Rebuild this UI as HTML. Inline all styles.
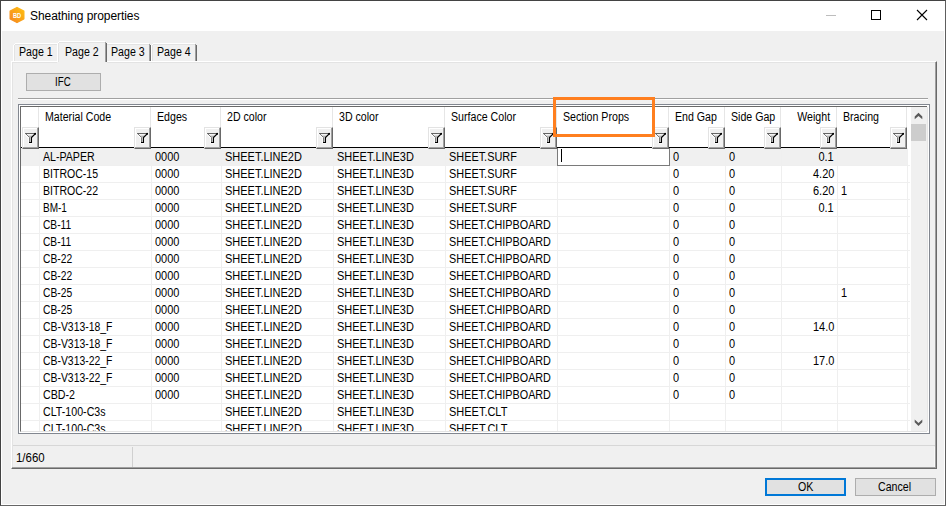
<!DOCTYPE html>
<html><head><meta charset="utf-8"><title>Sheathing properties</title>
<style>
*{box-sizing:border-box;margin:0;padding:0}
html,body{width:946px;height:506px;overflow:hidden;background:#f0f0f0}
body{position:relative;font-family:"Liberation Sans",sans-serif;font-size:12px;color:#000;line-height:14px}
.a{position:absolute}
.t{position:absolute;white-space:nowrap;font-size:12px;line-height:14px;transform:scaleX(0.885);transform-origin:0 0}
.t.r{transform-origin:100% 0}
#ttext{left:30px;top:9px;font-size:12px;line-height:15px;white-space:nowrap;letter-spacing:-0.07px}
.fb{position:absolute;width:17px;height:22px;background:#f0f0f0;border-left:1px solid #e3e3e3;border-top:1px solid #e3e3e3;border-right:1px solid #696969;border-bottom:1px solid #696969;box-shadow:inset -1px -1px 0 #a0a0a0, inset 1px 1px 0 #fff}
.fb svg{position:absolute;left:1px;top:4px}
.vl{position:absolute;width:1px;background:#efefef;top:0;height:325px}
.hl{position:absolute;height:1px;background:#efefef;left:0}
</style></head><body>
<div class="a" style="left:0;top:0;width:946px;height:506px;border:1px solid #434343;border-right-color:#5e5e5e;border-bottom-color:#666"></div>
<div class="a" style="left:1px;top:31px;width:944px;height:474px;border:1px solid #fff;border-top:none"></div>
<div class="a" style="left:1px;top:1px;width:944px;height:30px;background:#fff"></div>
<svg class="a" style="left:8px;top:6px" width="18" height="18" viewBox="0 0 18 18"><defs><linearGradient id="g" x1="0" y1="1" x2="1" y2="0"><stop offset="0" stop-color="#f5851f"/><stop offset="1" stop-color="#ffc010"/></linearGradient></defs><path d="M9 1.5L15.8 5.2V12.8L9 16.5L2.2 12.8V5.2Z" fill="url(#g)" stroke="url(#g)" stroke-width="1.4" stroke-linejoin="round"/><text x="9.1" y="12" font-family="Liberation Sans,sans-serif" font-size="7.4" font-weight="bold" fill="#fff" text-anchor="middle" textLength="8.2" lengthAdjust="spacingAndGlyphs">BD</text></svg>
<div id="ttext" class="a">Sheathing properties</div>
<div class="a" style="left:826px;top:15px;width:10px;height:1px;background:#bdbdbd"></div>
<div class="a" style="left:871px;top:10px;width:10px;height:10px;border:1px solid #000"></div>
<svg class="a" style="left:916px;top:9px" width="12" height="12" viewBox="0 0 12 12"><path d="M1 1L11 11M11 1L1 11" stroke="#000" stroke-width="1.1" fill="none"/></svg>

<div class="a" style="left:11px;top:61px;width:926px;height:408px;background:transparent;border-left:1px solid #fff;border-top:1px solid #fff;border-right:1px solid #696969;border-bottom:1px solid #696969;box-shadow:inset -1px -1px 0 #a0a0a0, inset 1px 1px 0 #e3e3e3"></div>
<div class="a" style="left:13px;top:45px;width:1px;height:16px;background:#fff;"></div>
<div class="a" style="left:14px;top:45px;width:1px;height:16px;background:#e3e3e3;"></div>
<div class="a" style="left:14px;top:44px;width:1px;height:1px;background:#fff;"></div>
<div class="a" style="left:15px;top:43px;width:42px;height:1px;background:#fff;"></div>
<div class="a" style="left:15px;top:44px;width:42px;height:1px;background:#e3e3e3;"></div>
<div class="a" style="left:107px;top:43px;width:42px;height:1px;background:#fff;"></div>
<div class="a" style="left:107px;top:44px;width:42px;height:1px;background:#e3e3e3;"></div>
<div class="a" style="left:150px;top:45px;width:1px;height:16px;background:#696969;"></div>
<div class="a" style="left:149px;top:44px;width:1px;height:17px;background:#a0a0a0;"></div>
<div class="a" style="left:151px;top:45px;width:1px;height:16px;background:#fff;"></div>
<div class="a" style="left:152px;top:45px;width:1px;height:16px;background:#e3e3e3;"></div>
<div class="a" style="left:152px;top:44px;width:1px;height:1px;background:#fff;"></div>
<div class="a" style="left:153px;top:43px;width:42px;height:1px;background:#fff;"></div>
<div class="a" style="left:153px;top:44px;width:42px;height:1px;background:#e3e3e3;"></div>
<div class="a" style="left:196px;top:45px;width:1px;height:16px;background:#696969;"></div>
<div class="a" style="left:195px;top:44px;width:1px;height:17px;background:#a0a0a0;"></div>
<div class="a" style="left:57px;top:41px;width:50px;height:22px;background:#f0f0f0;"></div>
<div class="a" style="left:57px;top:43px;width:1px;height:19px;background:#fff;"></div>
<div class="a" style="left:58px;top:43px;width:1px;height:19px;background:#e3e3e3;"></div>
<div class="a" style="left:58px;top:42px;width:1px;height:1px;background:#fff;"></div>
<div class="a" style="left:59px;top:41px;width:46px;height:1px;background:#fff;"></div>
<div class="a" style="left:59px;top:42px;width:46px;height:1px;background:#e3e3e3;"></div>
<div class="a" style="left:106px;top:43px;width:1px;height:19px;background:#696969;"></div>
<div class="a" style="left:105px;top:42px;width:1px;height:20px;background:#a0a0a0;"></div>
<div class="a" style="left:59px;top:61px;width:46px;height:2px;background:#f0f0f0;"></div>
<div class="t" style="left:19px;top:45px;">Page 1</div>
<div class="t" style="left:65px;top:45px;">Page 2</div>
<div class="t" style="left:111px;top:45px;">Page 3</div>
<div class="t" style="left:157px;top:45px;">Page 4</div>
<div class="a" style="left:26px;top:73px;width:75px;height:18px;background:#e1e1e1;border:1px solid #adadad"></div>
<div class="t" style="left:55.2px;top:75px;transform:scaleX(0.81);">IFC</div>
<div class="a" style="left:18px;top:98px;width:910px;height:1px;background:#a0a0a0;"></div>
<div class="a" style="left:18px;top:99px;width:910px;height:1px;background:#fff;"></div>
<div class="a" style="left:18px;top:104px;width:912px;height:330px;background:#fff;border:1px solid #828790"></div>
<div class="a" style="left:20px;top:106px;width:907px;height:326px;background:#fff;border-left:1px solid #696969;border-top:1px solid #696969;border-bottom:1px solid #e3e3e3"></div>
<div class="a" style="left:21px;top:107px;width:907px;height:324px;overflow:hidden">
<div class="a" style="left:0px;top:41px;width:887px;height:18px;background:#f0f0f0;"></div>
<div class="vl" style="left:18px;top:41px"></div>
<div class="vl" style="left:17px;height:40px;background:#e6e6e6"></div>
<div class="vl" style="left:130px;top:41px"></div>
<div class="vl" style="left:129px;height:40px;background:#e6e6e6"></div>
<div class="vl" style="left:200px;top:41px"></div>
<div class="vl" style="left:199px;height:40px;background:#e6e6e6"></div>
<div class="vl" style="left:312px;top:41px"></div>
<div class="vl" style="left:311px;height:40px;background:#e6e6e6"></div>
<div class="vl" style="left:424px;top:41px"></div>
<div class="vl" style="left:423px;height:40px;background:#e6e6e6"></div>
<div class="vl" style="left:536px;top:41px"></div>
<div class="vl" style="left:535px;height:40px;background:#e6e6e6"></div>
<div class="vl" style="left:648px;top:41px"></div>
<div class="vl" style="left:647px;height:40px;background:#e6e6e6"></div>
<div class="vl" style="left:704px;top:41px"></div>
<div class="vl" style="left:703px;height:40px;background:#e6e6e6"></div>
<div class="vl" style="left:760px;top:41px"></div>
<div class="vl" style="left:759px;height:40px;background:#e6e6e6"></div>
<div class="vl" style="left:816px;top:41px"></div>
<div class="vl" style="left:815px;height:40px;background:#e6e6e6"></div>
<div class="vl" style="left:886px;top:41px"></div>
<div class="vl" style="left:885px;height:40px;background:#e6e6e6"></div>
<div class="hl" style="top:58px;width:889px"></div>
<div class="hl" style="top:75px;width:889px"></div>
<div class="hl" style="top:92px;width:889px"></div>
<div class="hl" style="top:109px;width:889px"></div>
<div class="hl" style="top:126px;width:889px"></div>
<div class="hl" style="top:143px;width:889px"></div>
<div class="hl" style="top:160px;width:889px"></div>
<div class="hl" style="top:177px;width:889px"></div>
<div class="hl" style="top:194px;width:889px"></div>
<div class="hl" style="top:211px;width:889px"></div>
<div class="hl" style="top:228px;width:889px"></div>
<div class="hl" style="top:245px;width:889px"></div>
<div class="hl" style="top:262px;width:889px"></div>
<div class="hl" style="top:279px;width:889px"></div>
<div class="hl" style="top:296px;width:889px"></div>
<div class="hl" style="top:313px;width:889px"></div>
<div class="hl" style="top:330px;width:889px"></div>
<div class="a" style="left:0px;top:40px;width:886px;height:1px;background:#000;"></div>
<div class="t" style="left:24px;top:3px;">Material Code</div>
<div class="t" style="left:136px;top:3px;">Edges</div>
<div class="t" style="left:206px;top:3px;">2D color</div>
<div class="t" style="left:318px;top:3px;">3D color</div>
<div class="t" style="left:430px;top:3px;">Surface Color</div>
<div class="t" style="left:542px;top:3px;">Section Props</div>
<div class="t" style="left:654px;top:3px;">End Gap</div>
<div class="t" style="left:710px;top:3px;">Side Gap</div>
<div class="t r" style="right:98px;top:3px;">Weight</div>
<div class="t" style="left:822px;top:3px;">Bracing</div>
<div class="a" style="left:536px;top:41px;width:113px;height:18px;background:#fff;border:1px solid #7a7a7a;border-top:none"></div>
<div class="a" style="left:540px;top:42px;width:1px;height:13px;background:#000;"></div>
<div class="fb" style="left:1px;top:20px"><svg width="13" height="12" viewBox="-1 -1 13 12"><path d="M0.5 0.5H10.5L6.5 4.5V9.5H4.5V4.5Z" fill="#fff" stroke="#fff" stroke-width="2.6" stroke-linejoin="round"/><path d="M3 2.4H8L6.2 4.7H4.8Z" fill="#b4b4b4"/><rect x="5" y="4.5" width="1" height="5" fill="#cfcfcf"/><path d="M0 0.5H10" stroke="#646464" stroke-width="1.15" fill="none"/><path d="M0.5 0.5L4.5 4.5V9.5" stroke="#777" stroke-width="1" fill="none"/><path d="M10.5 0.5L6.5 4.5V9.5H4" stroke="#000" stroke-width="1.15" fill="none"/><circle cx="10.2" cy="0.8" r="0.95" fill="#000"/></svg></div>
<div class="fb" style="left:113px;top:20px"><svg width="13" height="12" viewBox="-1 -1 13 12"><path d="M0.5 0.5H10.5L6.5 4.5V9.5H4.5V4.5Z" fill="#fff" stroke="#fff" stroke-width="2.6" stroke-linejoin="round"/><path d="M3 2.4H8L6.2 4.7H4.8Z" fill="#b4b4b4"/><rect x="5" y="4.5" width="1" height="5" fill="#cfcfcf"/><path d="M0 0.5H10" stroke="#646464" stroke-width="1.15" fill="none"/><path d="M0.5 0.5L4.5 4.5V9.5" stroke="#777" stroke-width="1" fill="none"/><path d="M10.5 0.5L6.5 4.5V9.5H4" stroke="#000" stroke-width="1.15" fill="none"/><circle cx="10.2" cy="0.8" r="0.95" fill="#000"/></svg></div>
<div class="fb" style="left:183px;top:20px"><svg width="13" height="12" viewBox="-1 -1 13 12"><path d="M0.5 0.5H10.5L6.5 4.5V9.5H4.5V4.5Z" fill="#fff" stroke="#fff" stroke-width="2.6" stroke-linejoin="round"/><path d="M3 2.4H8L6.2 4.7H4.8Z" fill="#b4b4b4"/><rect x="5" y="4.5" width="1" height="5" fill="#cfcfcf"/><path d="M0 0.5H10" stroke="#646464" stroke-width="1.15" fill="none"/><path d="M0.5 0.5L4.5 4.5V9.5" stroke="#777" stroke-width="1" fill="none"/><path d="M10.5 0.5L6.5 4.5V9.5H4" stroke="#000" stroke-width="1.15" fill="none"/><circle cx="10.2" cy="0.8" r="0.95" fill="#000"/></svg></div>
<div class="fb" style="left:295px;top:20px"><svg width="13" height="12" viewBox="-1 -1 13 12"><path d="M0.5 0.5H10.5L6.5 4.5V9.5H4.5V4.5Z" fill="#fff" stroke="#fff" stroke-width="2.6" stroke-linejoin="round"/><path d="M3 2.4H8L6.2 4.7H4.8Z" fill="#b4b4b4"/><rect x="5" y="4.5" width="1" height="5" fill="#cfcfcf"/><path d="M0 0.5H10" stroke="#646464" stroke-width="1.15" fill="none"/><path d="M0.5 0.5L4.5 4.5V9.5" stroke="#777" stroke-width="1" fill="none"/><path d="M10.5 0.5L6.5 4.5V9.5H4" stroke="#000" stroke-width="1.15" fill="none"/><circle cx="10.2" cy="0.8" r="0.95" fill="#000"/></svg></div>
<div class="fb" style="left:407px;top:20px"><svg width="13" height="12" viewBox="-1 -1 13 12"><path d="M0.5 0.5H10.5L6.5 4.5V9.5H4.5V4.5Z" fill="#fff" stroke="#fff" stroke-width="2.6" stroke-linejoin="round"/><path d="M3 2.4H8L6.2 4.7H4.8Z" fill="#b4b4b4"/><rect x="5" y="4.5" width="1" height="5" fill="#cfcfcf"/><path d="M0 0.5H10" stroke="#646464" stroke-width="1.15" fill="none"/><path d="M0.5 0.5L4.5 4.5V9.5" stroke="#777" stroke-width="1" fill="none"/><path d="M10.5 0.5L6.5 4.5V9.5H4" stroke="#000" stroke-width="1.15" fill="none"/><circle cx="10.2" cy="0.8" r="0.95" fill="#000"/></svg></div>
<div class="fb" style="left:519px;top:20px"><svg width="13" height="12" viewBox="-1 -1 13 12"><path d="M0.5 0.5H10.5L6.5 4.5V9.5H4.5V4.5Z" fill="#fff" stroke="#fff" stroke-width="2.6" stroke-linejoin="round"/><path d="M3 2.4H8L6.2 4.7H4.8Z" fill="#b4b4b4"/><rect x="5" y="4.5" width="1" height="5" fill="#cfcfcf"/><path d="M0 0.5H10" stroke="#646464" stroke-width="1.15" fill="none"/><path d="M0.5 0.5L4.5 4.5V9.5" stroke="#777" stroke-width="1" fill="none"/><path d="M10.5 0.5L6.5 4.5V9.5H4" stroke="#000" stroke-width="1.15" fill="none"/><circle cx="10.2" cy="0.8" r="0.95" fill="#000"/></svg></div>
<div class="fb" style="left:631px;top:20px"><svg width="13" height="12" viewBox="-1 -1 13 12"><path d="M0.5 0.5H10.5L6.5 4.5V9.5H4.5V4.5Z" fill="#fff" stroke="#fff" stroke-width="2.6" stroke-linejoin="round"/><path d="M3 2.4H8L6.2 4.7H4.8Z" fill="#b4b4b4"/><rect x="5" y="4.5" width="1" height="5" fill="#cfcfcf"/><path d="M0 0.5H10" stroke="#646464" stroke-width="1.15" fill="none"/><path d="M0.5 0.5L4.5 4.5V9.5" stroke="#777" stroke-width="1" fill="none"/><path d="M10.5 0.5L6.5 4.5V9.5H4" stroke="#000" stroke-width="1.15" fill="none"/><circle cx="10.2" cy="0.8" r="0.95" fill="#000"/></svg></div>
<div class="fb" style="left:687px;top:20px"><svg width="13" height="12" viewBox="-1 -1 13 12"><path d="M0.5 0.5H10.5L6.5 4.5V9.5H4.5V4.5Z" fill="#fff" stroke="#fff" stroke-width="2.6" stroke-linejoin="round"/><path d="M3 2.4H8L6.2 4.7H4.8Z" fill="#b4b4b4"/><rect x="5" y="4.5" width="1" height="5" fill="#cfcfcf"/><path d="M0 0.5H10" stroke="#646464" stroke-width="1.15" fill="none"/><path d="M0.5 0.5L4.5 4.5V9.5" stroke="#777" stroke-width="1" fill="none"/><path d="M10.5 0.5L6.5 4.5V9.5H4" stroke="#000" stroke-width="1.15" fill="none"/><circle cx="10.2" cy="0.8" r="0.95" fill="#000"/></svg></div>
<div class="fb" style="left:743px;top:20px"><svg width="13" height="12" viewBox="-1 -1 13 12"><path d="M0.5 0.5H10.5L6.5 4.5V9.5H4.5V4.5Z" fill="#fff" stroke="#fff" stroke-width="2.6" stroke-linejoin="round"/><path d="M3 2.4H8L6.2 4.7H4.8Z" fill="#b4b4b4"/><rect x="5" y="4.5" width="1" height="5" fill="#cfcfcf"/><path d="M0 0.5H10" stroke="#646464" stroke-width="1.15" fill="none"/><path d="M0.5 0.5L4.5 4.5V9.5" stroke="#777" stroke-width="1" fill="none"/><path d="M10.5 0.5L6.5 4.5V9.5H4" stroke="#000" stroke-width="1.15" fill="none"/><circle cx="10.2" cy="0.8" r="0.95" fill="#000"/></svg></div>
<div class="fb" style="left:799px;top:20px"><svg width="13" height="12" viewBox="-1 -1 13 12"><path d="M0.5 0.5H10.5L6.5 4.5V9.5H4.5V4.5Z" fill="#fff" stroke="#fff" stroke-width="2.6" stroke-linejoin="round"/><path d="M3 2.4H8L6.2 4.7H4.8Z" fill="#b4b4b4"/><rect x="5" y="4.5" width="1" height="5" fill="#cfcfcf"/><path d="M0 0.5H10" stroke="#646464" stroke-width="1.15" fill="none"/><path d="M0.5 0.5L4.5 4.5V9.5" stroke="#777" stroke-width="1" fill="none"/><path d="M10.5 0.5L6.5 4.5V9.5H4" stroke="#000" stroke-width="1.15" fill="none"/><circle cx="10.2" cy="0.8" r="0.95" fill="#000"/></svg></div>
<div class="fb" style="left:869px;top:20px"><svg width="13" height="12" viewBox="-1 -1 13 12"><path d="M0.5 0.5H10.5L6.5 4.5V9.5H4.5V4.5Z" fill="#fff" stroke="#fff" stroke-width="2.6" stroke-linejoin="round"/><path d="M3 2.4H8L6.2 4.7H4.8Z" fill="#b4b4b4"/><rect x="5" y="4.5" width="1" height="5" fill="#cfcfcf"/><path d="M0 0.5H10" stroke="#646464" stroke-width="1.15" fill="none"/><path d="M0.5 0.5L4.5 4.5V9.5" stroke="#777" stroke-width="1" fill="none"/><path d="M10.5 0.5L6.5 4.5V9.5H4" stroke="#000" stroke-width="1.15" fill="none"/><circle cx="10.2" cy="0.8" r="0.95" fill="#000"/></svg></div>
<div class="t" style="left:22px;top:43px;transform:scaleX(0.884);">AL-PAPER</div>
<div class="t" style="left:134px;top:43px;transform:scaleX(0.915);">0000</div>
<div class="t" style="left:204px;top:43px;transform:scaleX(0.915);">SHEET.LINE2D</div>
<div class="t" style="left:316px;top:43px;transform:scaleX(0.915);">SHEET.LINE3D</div>
<div class="t" style="left:428px;top:43px;transform:scaleX(0.908);">SHEET.SURF</div>
<div class="t" style="left:652px;top:43px;transform:scaleX(0.915);">0</div>
<div class="t" style="left:708px;top:43px;transform:scaleX(0.915);">0</div>
<div class="t r" style="right:94px;top:43px;transform:scaleX(0.915);">0.1</div>
<div class="t" style="left:22px;top:60px;transform:scaleX(0.878);">BITROC-15</div>
<div class="t" style="left:134px;top:60px;transform:scaleX(0.915);">0000</div>
<div class="t" style="left:204px;top:60px;transform:scaleX(0.915);">SHEET.LINE2D</div>
<div class="t" style="left:316px;top:60px;transform:scaleX(0.915);">SHEET.LINE3D</div>
<div class="t" style="left:428px;top:60px;transform:scaleX(0.908);">SHEET.SURF</div>
<div class="t" style="left:652px;top:60px;transform:scaleX(0.915);">0</div>
<div class="t" style="left:708px;top:60px;transform:scaleX(0.915);">0</div>
<div class="t r" style="right:94px;top:60px;transform:scaleX(0.915);">4.20</div>
<div class="t" style="left:22px;top:77px;transform:scaleX(0.878);">BITROC-22</div>
<div class="t" style="left:134px;top:77px;transform:scaleX(0.915);">0000</div>
<div class="t" style="left:204px;top:77px;transform:scaleX(0.915);">SHEET.LINE2D</div>
<div class="t" style="left:316px;top:77px;transform:scaleX(0.915);">SHEET.LINE3D</div>
<div class="t" style="left:428px;top:77px;transform:scaleX(0.908);">SHEET.SURF</div>
<div class="t" style="left:652px;top:77px;transform:scaleX(0.915);">0</div>
<div class="t" style="left:708px;top:77px;transform:scaleX(0.915);">0</div>
<div class="t r" style="right:94px;top:77px;transform:scaleX(0.915);">6.20</div>
<div class="t" style="left:820px;top:77px;transform:scaleX(0.915);">1</div>
<div class="t" style="left:22px;top:94px;transform:scaleX(0.835);">BM-1</div>
<div class="t" style="left:134px;top:94px;transform:scaleX(0.915);">0000</div>
<div class="t" style="left:204px;top:94px;transform:scaleX(0.915);">SHEET.LINE2D</div>
<div class="t" style="left:316px;top:94px;transform:scaleX(0.915);">SHEET.LINE3D</div>
<div class="t" style="left:428px;top:94px;transform:scaleX(0.908);">SHEET.SURF</div>
<div class="t" style="left:652px;top:94px;transform:scaleX(0.915);">0</div>
<div class="t" style="left:708px;top:94px;transform:scaleX(0.915);">0</div>
<div class="t r" style="right:94px;top:94px;transform:scaleX(0.915);">0.1</div>
<div class="t" style="left:21.5px;top:111px;transform:scaleX(0.85);">CB-11</div>
<div class="t" style="left:134px;top:111px;transform:scaleX(0.915);">0000</div>
<div class="t" style="left:204px;top:111px;transform:scaleX(0.915);">SHEET.LINE2D</div>
<div class="t" style="left:316px;top:111px;transform:scaleX(0.915);">SHEET.LINE3D</div>
<div class="t" style="left:428px;top:111px;transform:scaleX(0.899);">SHEET.CHIPBOARD</div>
<div class="t" style="left:652px;top:111px;transform:scaleX(0.915);">0</div>
<div class="t" style="left:708px;top:111px;transform:scaleX(0.915);">0</div>
<div class="t" style="left:21.5px;top:128px;transform:scaleX(0.85);">CB-11</div>
<div class="t" style="left:134px;top:128px;transform:scaleX(0.915);">0000</div>
<div class="t" style="left:204px;top:128px;transform:scaleX(0.915);">SHEET.LINE2D</div>
<div class="t" style="left:316px;top:128px;transform:scaleX(0.915);">SHEET.LINE3D</div>
<div class="t" style="left:428px;top:128px;transform:scaleX(0.899);">SHEET.CHIPBOARD</div>
<div class="t" style="left:652px;top:128px;transform:scaleX(0.915);">0</div>
<div class="t" style="left:708px;top:128px;transform:scaleX(0.915);">0</div>
<div class="t" style="left:21.5px;top:145px;transform:scaleX(0.856);">CB-22</div>
<div class="t" style="left:134px;top:145px;transform:scaleX(0.915);">0000</div>
<div class="t" style="left:204px;top:145px;transform:scaleX(0.915);">SHEET.LINE2D</div>
<div class="t" style="left:316px;top:145px;transform:scaleX(0.915);">SHEET.LINE3D</div>
<div class="t" style="left:428px;top:145px;transform:scaleX(0.899);">SHEET.CHIPBOARD</div>
<div class="t" style="left:652px;top:145px;transform:scaleX(0.915);">0</div>
<div class="t" style="left:708px;top:145px;transform:scaleX(0.915);">0</div>
<div class="t" style="left:21.5px;top:162px;transform:scaleX(0.856);">CB-22</div>
<div class="t" style="left:134px;top:162px;transform:scaleX(0.915);">0000</div>
<div class="t" style="left:204px;top:162px;transform:scaleX(0.915);">SHEET.LINE2D</div>
<div class="t" style="left:316px;top:162px;transform:scaleX(0.915);">SHEET.LINE3D</div>
<div class="t" style="left:428px;top:162px;transform:scaleX(0.899);">SHEET.CHIPBOARD</div>
<div class="t" style="left:652px;top:162px;transform:scaleX(0.915);">0</div>
<div class="t" style="left:708px;top:162px;transform:scaleX(0.915);">0</div>
<div class="t" style="left:21.5px;top:179px;transform:scaleX(0.856);">CB-25</div>
<div class="t" style="left:134px;top:179px;transform:scaleX(0.915);">0000</div>
<div class="t" style="left:204px;top:179px;transform:scaleX(0.915);">SHEET.LINE2D</div>
<div class="t" style="left:316px;top:179px;transform:scaleX(0.915);">SHEET.LINE3D</div>
<div class="t" style="left:428px;top:179px;transform:scaleX(0.899);">SHEET.CHIPBOARD</div>
<div class="t" style="left:652px;top:179px;transform:scaleX(0.915);">0</div>
<div class="t" style="left:708px;top:179px;transform:scaleX(0.915);">0</div>
<div class="t" style="left:820px;top:179px;transform:scaleX(0.915);">1</div>
<div class="t" style="left:21.5px;top:196px;transform:scaleX(0.856);">CB-25</div>
<div class="t" style="left:134px;top:196px;transform:scaleX(0.915);">0000</div>
<div class="t" style="left:204px;top:196px;transform:scaleX(0.915);">SHEET.LINE2D</div>
<div class="t" style="left:316px;top:196px;transform:scaleX(0.915);">SHEET.LINE3D</div>
<div class="t" style="left:428px;top:196px;transform:scaleX(0.899);">SHEET.CHIPBOARD</div>
<div class="t" style="left:652px;top:196px;transform:scaleX(0.915);">0</div>
<div class="t" style="left:708px;top:196px;transform:scaleX(0.915);">0</div>
<div class="t" style="left:21.5px;top:213px;transform:scaleX(0.867);">CB-V313-18_F</div>
<div class="t" style="left:134px;top:213px;transform:scaleX(0.915);">0000</div>
<div class="t" style="left:204px;top:213px;transform:scaleX(0.915);">SHEET.LINE2D</div>
<div class="t" style="left:316px;top:213px;transform:scaleX(0.915);">SHEET.LINE3D</div>
<div class="t" style="left:428px;top:213px;transform:scaleX(0.899);">SHEET.CHIPBOARD</div>
<div class="t" style="left:652px;top:213px;transform:scaleX(0.915);">0</div>
<div class="t" style="left:708px;top:213px;transform:scaleX(0.915);">0</div>
<div class="t r" style="right:94px;top:213px;transform:scaleX(0.915);">14.0</div>
<div class="t" style="left:21.5px;top:230px;transform:scaleX(0.867);">CB-V313-18_F</div>
<div class="t" style="left:134px;top:230px;transform:scaleX(0.915);">0000</div>
<div class="t" style="left:204px;top:230px;transform:scaleX(0.915);">SHEET.LINE2D</div>
<div class="t" style="left:316px;top:230px;transform:scaleX(0.915);">SHEET.LINE3D</div>
<div class="t" style="left:428px;top:230px;transform:scaleX(0.899);">SHEET.CHIPBOARD</div>
<div class="t" style="left:652px;top:230px;transform:scaleX(0.915);">0</div>
<div class="t" style="left:708px;top:230px;transform:scaleX(0.915);">0</div>
<div class="t" style="left:21.5px;top:247px;transform:scaleX(0.867);">CB-V313-22_F</div>
<div class="t" style="left:134px;top:247px;transform:scaleX(0.915);">0000</div>
<div class="t" style="left:204px;top:247px;transform:scaleX(0.915);">SHEET.LINE2D</div>
<div class="t" style="left:316px;top:247px;transform:scaleX(0.915);">SHEET.LINE3D</div>
<div class="t" style="left:428px;top:247px;transform:scaleX(0.899);">SHEET.CHIPBOARD</div>
<div class="t" style="left:652px;top:247px;transform:scaleX(0.915);">0</div>
<div class="t" style="left:708px;top:247px;transform:scaleX(0.915);">0</div>
<div class="t r" style="right:94px;top:247px;transform:scaleX(0.915);">17.0</div>
<div class="t" style="left:21.5px;top:264px;transform:scaleX(0.867);">CB-V313-22_F</div>
<div class="t" style="left:134px;top:264px;transform:scaleX(0.915);">0000</div>
<div class="t" style="left:204px;top:264px;transform:scaleX(0.915);">SHEET.LINE2D</div>
<div class="t" style="left:316px;top:264px;transform:scaleX(0.915);">SHEET.LINE3D</div>
<div class="t" style="left:428px;top:264px;transform:scaleX(0.899);">SHEET.CHIPBOARD</div>
<div class="t" style="left:652px;top:264px;transform:scaleX(0.915);">0</div>
<div class="t" style="left:708px;top:264px;transform:scaleX(0.915);">0</div>
<div class="t" style="left:21.5px;top:281px;transform:scaleX(0.889);">CBD-2</div>
<div class="t" style="left:134px;top:281px;transform:scaleX(0.915);">0000</div>
<div class="t" style="left:204px;top:281px;transform:scaleX(0.915);">SHEET.LINE2D</div>
<div class="t" style="left:316px;top:281px;transform:scaleX(0.915);">SHEET.LINE3D</div>
<div class="t" style="left:428px;top:281px;transform:scaleX(0.899);">SHEET.CHIPBOARD</div>
<div class="t" style="left:652px;top:281px;transform:scaleX(0.915);">0</div>
<div class="t" style="left:708px;top:281px;transform:scaleX(0.915);">0</div>
<div class="t" style="left:21.5px;top:298px;transform:scaleX(0.888);">CLT-100-C3s</div>
<div class="t" style="left:204px;top:298px;transform:scaleX(0.915);">SHEET.LINE2D</div>
<div class="t" style="left:316px;top:298px;transform:scaleX(0.915);">SHEET.LINE3D</div>
<div class="t" style="left:428px;top:298px;transform:scaleX(0.915);">SHEET.CLT</div>
<div class="t" style="left:21.5px;top:315px;transform:scaleX(0.888);">CLT-100-C3s</div>
<div class="t" style="left:204px;top:315px;transform:scaleX(0.915);">SHEET.LINE2D</div>
<div class="t" style="left:316px;top:315px;transform:scaleX(0.915);">SHEET.LINE3D</div>
<div class="t" style="left:428px;top:315px;transform:scaleX(0.915);">SHEET.CLT</div>
<div class="a" style="left:890px;top:0px;width:17px;height:324px;background:#f0f0f0;"></div>
<div class="a" style="left:906px;top:0px;width:1px;height:324px;background:#e6e6e6;"></div>
<div class="a" style="left:890px;top:17px;width:15px;height:17px;background:#cdcdcd;"></div>
<svg class="a" style="left:892px;top:4px" width="12" height="9" viewBox="0 0 12 9"><path d="M5.5 1.8L9.3 5.6V8.2L5.5 4.9L1.7 8.2V5.6Z" fill="#5a5a5a"/></svg>
<svg class="a" style="left:892px;top:311px" width="12" height="9" viewBox="0 0 12 9"><path d="M5.5 8L9.3 4.2V1.6L5.5 4.9L1.7 1.6V4.2Z" fill="#5a5a5a"/></svg>
</div>
<div class="a" style="left:553px;top:97px;width:102px;height:40px;background:transparent;border:3px solid #ff7f1f"></div>
<div class="a" style="left:13px;top:445px;width:922px;height:1px;background:#d7d7d7;"></div>
<div class="a" style="left:132px;top:447px;width:1px;height:20px;background:#d0d0d0;"></div>
<div class="a" style="left:934px;top:447px;width:1px;height:20px;background:#f9f9f9;"></div>
<div class="t" style="left:15.5px;top:451px;transform:scaleX(0.955);">1/660</div>
<div class="a" style="left:765px;top:478px;width:81px;height:18px;background:#e1e1e1;border:2px solid #0078d7"></div>
<div class="t" style="left:797.5px;top:480px;">OK</div>
<div class="a" style="left:855px;top:478px;width:81px;height:18px;background:#e1e1e1;border:1px solid #adadad"></div>
<div class="t" style="left:878.3px;top:480px;">Cancel</div>
</body></html>
